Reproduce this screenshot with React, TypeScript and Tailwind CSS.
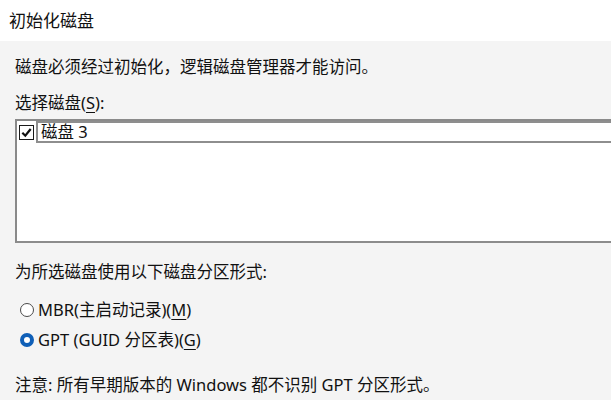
const FONT = '"Noto Sans", "Noto Sans CJK SC", sans-serif'

function CheckBox() {
  return (
    <span className="flex h-[15px] w-[15px] shrink-0 items-center justify-center border border-[#1a1a1a] bg-white">
      <svg width="11" height="11" viewBox="0 0 10 10">
        <path d="M1.2 5.2 L3.9 7.9 L8.8 1.8" fill="none" stroke="#111" strokeWidth="2" />
      </svg>
    </span>
  )
}

function Radio({ checked, label, accel }: { checked: boolean; label: string; accel: string }) {
  return (
    <div className="flex h-[24px] items-center">
      {checked ? (
        <span className="ml-[5px] h-[14px] w-[14px] rounded-full border-[4px] border-[#0f5fb7] bg-white" />
      ) : (
        <span className="ml-[5px] h-[14px] w-[14px] rounded-full border border-[#4a4a4a] bg-white" />
      )}
      <span className="ml-[4px] text-[16.5px] leading-[24px] text-[#111]">
        {label}(<span className="underline underline-offset-[3px]">{accel}</span>)
      </span>
    </div>
  )
}

export default function App() {
  return (
    <div className="flex h-[400px] w-[611px] flex-col overflow-hidden bg-[#f4f4f4]" style={{ fontFamily: FONT }}>
      {/* title bar */}
      <div className="flex h-[41px] shrink-0 items-center bg-white pl-[9px] text-[17px] text-[#111]">
        初始化磁盘
      </div>

      <div className="flex flex-col pl-[15px] text-[16.5px] leading-[24px] text-[#111]">
        <div className="mt-[14px]">磁盘必须经过初始化，逻辑磁盘管理器才能访问。</div>
        <div className="mt-[12px]">
          选择磁盘(<span className="underline underline-offset-[3px]">S</span>):
        </div>

        {/* disk list */}
        <div className="mt-[4px] h-[124px] border-t-2 border-b-2 border-l-2 border-t-[#8a8a8a] border-b-[#8c8c8c] border-l-[#8a8a8a] bg-white">
          <div className="flex h-[22px] items-center">
            <span className="ml-[2px]">
              <CheckBox />
            </span>
            <div className="ml-[2px] flex h-[22px] flex-1 items-center border-y-2 border-l-2 border-y-[#8e8e8e] border-l-[#8e8e8e] pl-[3px]">
              磁盘 3
            </div>
          </div>
        </div>

        <div className="mt-[17px]">为所选磁盘使用以下磁盘分区形式:</div>
        <div className="mt-[14px]">
          <Radio checked={false} label="MBR(主启动记录)" accel="M" />
        </div>
        <div className="mt-[6px]">
          <Radio checked={true} label="GPT (GUID 分区表)" accel="G" />
        </div>

        <div className="mt-[21px]">注意: 所有早期版本的 Windows 都不识别 GPT 分区形式。</div>
      </div>
    </div>
  )
}
